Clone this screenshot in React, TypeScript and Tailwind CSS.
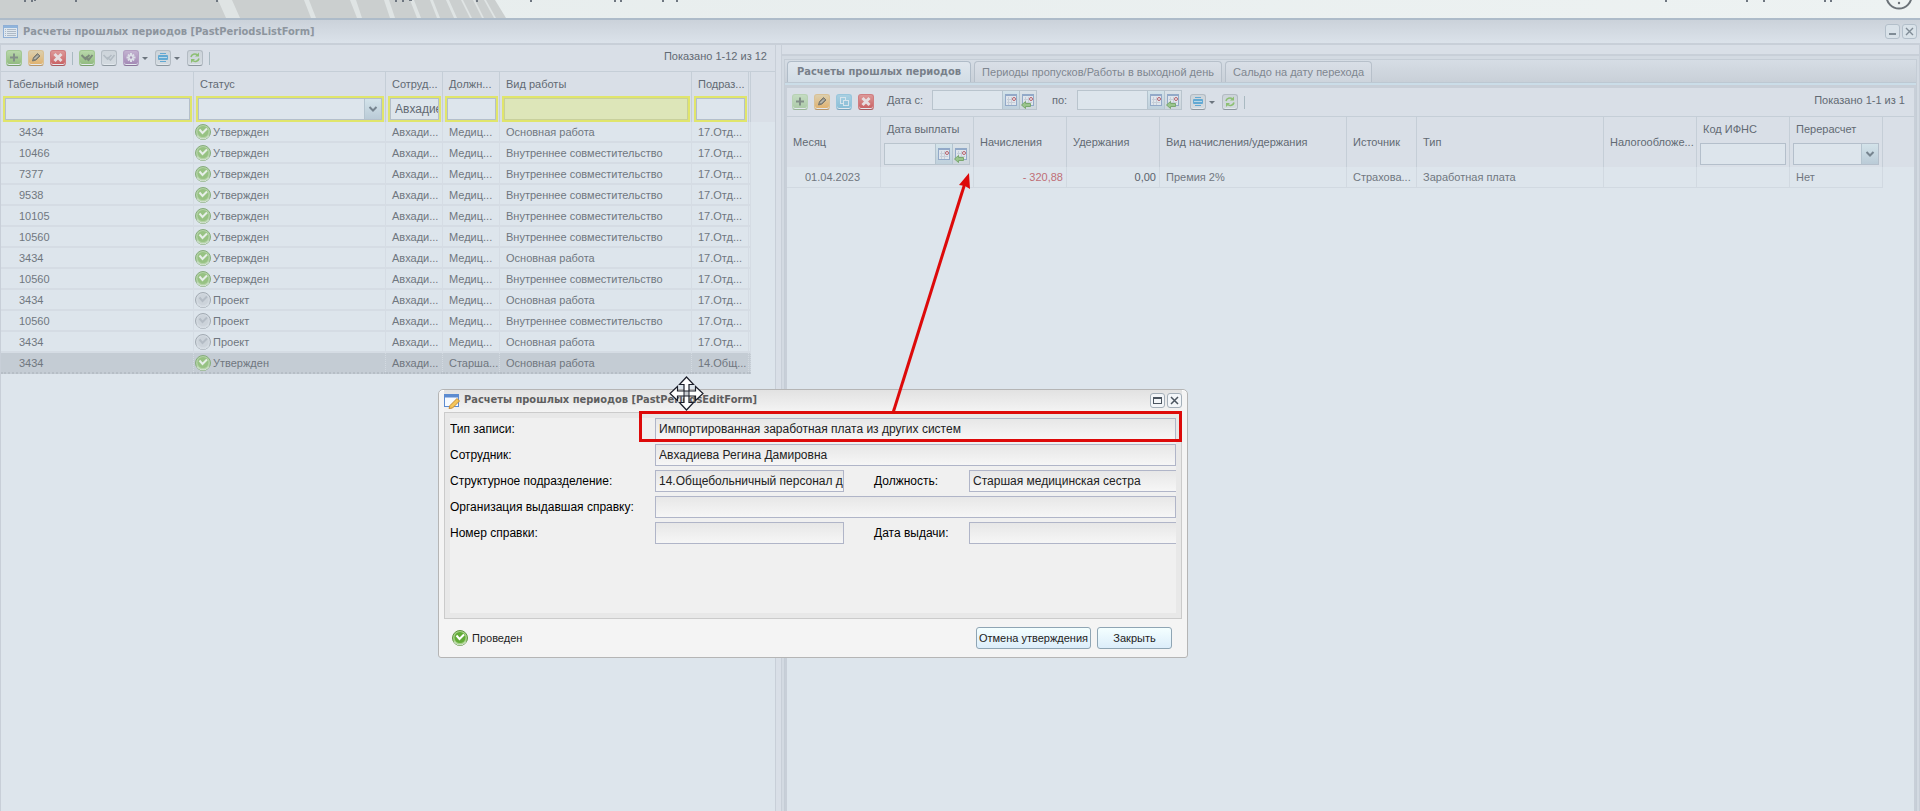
import { ReactNode } from 'react';

interface Row {
  num: string;
  approved: boolean;
  post: string;
  kind: string;
  dept: string;
  selected?: boolean;
}

const MAIN = 'Основная работа';
const INNER = 'Внутреннее совместительство';

const rows: Row[] = [
  { num: '3434', approved: true, post: 'Медиц...', kind: MAIN, dept: '17.Отд...' },
  { num: '10466', approved: true, post: 'Медиц...', kind: INNER, dept: '17.Отд...' },
  { num: '7377', approved: true, post: 'Медиц...', kind: INNER, dept: '17.Отд...' },
  { num: '9538', approved: true, post: 'Медиц...', kind: INNER, dept: '17.Отд...' },
  { num: '10105', approved: true, post: 'Медиц...', kind: INNER, dept: '17.Отд...' },
  { num: '10560', approved: true, post: 'Медиц...', kind: INNER, dept: '17.Отд...' },
  { num: '3434', approved: true, post: 'Медиц...', kind: MAIN, dept: '17.Отд...' },
  { num: '10560', approved: true, post: 'Медиц...', kind: INNER, dept: '17.Отд...' },
  { num: '3434', approved: false, post: 'Медиц...', kind: MAIN, dept: '17.Отд...' },
  { num: '10560', approved: false, post: 'Медиц...', kind: INNER, dept: '17.Отд...' },
  { num: '3434', approved: false, post: 'Медиц...', kind: MAIN, dept: '17.Отд...' },
  { num: '3434', approved: true, post: 'Старша...', kind: MAIN, dept: '14.Общ...', selected: true },
];

const tones = {
  green: 'from-[#b9d8ab] to-[#8fb97d] border-[#a3c893] border-b-[#7a9e6e]',
  greenDim: 'from-[#c4dcc2] to-[#abc9a6] border-[#b8d2b4] border-b-[#9ab598]',
  orange: 'from-[#dccfae] to-[#e0b06a] border-[#d9c196] border-b-[#b8966a]',
  red: 'from-[#dc9898] to-[#c85f62] border-[#d07d80] border-b-[#a85a5e]',
  blue: 'from-[#a9d0e2] to-[#86bdd6] border-[#98c6dc] border-b-[#7aa5bd]',
  violet: 'from-[#c3b2d0] to-[#a287b4] border-[#b39fc2] border-b-[#8a7599]',
  gray: 'from-[#cdd4da] to-[#d3dae0] border-[#b3bbc3] border-b-[#8d979f]',
};

const glyphs = {
  plus: <path d="M8 3.500v8M4 7.500h8" stroke="#828f88" strokeWidth="2" />,
  pencil: (
    <>
      <path d="M4.500 11l1-3.500 4-4 2.500 2.500-4 4z" fill="#8d8b80" stroke="#77776f" />
      <path d="M6.500 9l3.500-3.500" stroke="#d9dcd6" />
    </>
  ),
  cross: <path d="M4.500 4l7 7M11.500 4l-7 7" stroke="#e6dde0" strokeWidth="3" />,
  checks: <path d="M2.500 5l4 4 4-4M6.500 7l3 3L13.500 5" stroke="#7c8a7c" strokeWidth="2" />,
  checksDim: <path d="M2.500 5l4 4 4-4M6.500 7l3 3L13.500 5" stroke="#b2bbc3" strokeWidth="1.600" />,
  gear: (
    <>
      <path d="M8 3v9M3.500 7.500h9M5 4.500l6 6M11 4.500l-6 6" stroke="#dcdfe7" strokeWidth="2" />
      <circle cx="8" cy="7.500" r="1.200" fill="#a892b8" />
    </>
  ),
  copy: (
    <>
      <rect x="4.500" y="3.500" width="5" height="6" stroke="#d6e4ec" />
      <rect x="7.500" y="6.500" width="5" height="5" fill="#93c3da" stroke="#d6e4ec" />
    </>
  ),
  printer: (
    <>
      <path d="M5 3.500h6" stroke="#62a9d3" />
      <rect x="3" y="5" width="10" height="5" rx="1" fill="#62a9d3" />
      <path d="M4 7.500h8" stroke="#b9d8e8" />
      <path d="M5 11.500h6" stroke="#62a9d3" />
    </>
  ),
  refresh: (
    <>
      <path d="M4 7c.5-2.500 4-4 6.500-2M12 8.500c-.5 2.500-4 4-6.500 2" stroke="#8dbf73" strokeWidth="1.600" />
      <path d="M12 2.500v4H8zM4 13V9h4z" fill="#8dbf73" />
    </>
  ),
};

function ToolButton({ tone, glyph, title }: { tone: keyof typeof tones; glyph: keyof typeof glyphs; title: string }) {
  return (
    <button title={title} className={`w-4 h-4 shrink-0 rounded-[3px] border bg-linear-to-b shadow-[inset_0_-1px_0_#e3e9ee] ${tones[tone]}`}>
      <svg viewBox="1 1 14 14" fill="none" className="w-full h-full">
        {glyphs[glyph]}
      </svg>
    </button>
  );
}

function Caret() {
  return <span className="border-x-3 border-x-transparent border-t-3 border-t-[#6c757e] w-0 h-0 mx-px" />;
}

function Separator() {
  return <span className="w-px h-[13px] bg-[#a9b9c1]" />;
}

function StatusIcon({ approved, bright }: { approved: boolean; bright?: boolean }) {
  const rim = bright ? '#5f9440' : approved ? '#86ac7c' : '#a2aab2';
  const fill = bright ? '#62ab37' : approved ? '#97c283' : '#ccd3da';
  const top = bright ? '#a6d287' : approved ? '#b3d3a6' : '#d3dae1';
  const tick = bright ? '#ffffff' : approved ? '#e6eee8' : '#b4bcc5';
  return (
    <svg viewBox="0 0 16 16" className="w-4 h-4 shrink-0" fill="none">
      <circle cx="8" cy="8" r="7.500" fill={top} stroke={rim} />
      <circle cx="8" cy="7.500" r="5.500" fill={fill} />
      <path d="M2 11.500a7 7 0 0 0 12 0" stroke={approved ? '#dfe9e0' : '#dde4ea'} />
      <path d="M4.500 5.500L7.500 9 12 4.500" stroke={tick} strokeWidth="2" />
    </svg>
  );
}

function CalendarIcon({ arrow }: { arrow?: boolean }) {
  return (
    <svg viewBox="0 0 16 18" className="w-4 h-[18px]" fill="none">
      <rect x="2.500" y="3.500" width="11" height="11" fill="#dfe5ec" stroke="#92a9c8" />
      <path d="M2 4h12" stroke="#92a9c8" strokeWidth="2" />
      <path d="M4 8.500h8M4 11.500h8M5.500 6v8M8.500 6v8" stroke="#c6ced8" />
      <circle cx="11" cy="8" r="1.500" fill="#eceff3" stroke="#b5616c" />
      {arrow && <path d="M1.500 14l4-3.500v2h5v3h-5v2z" fill="#9ac58c" stroke="#7aa870" />}
    </svg>
  );
}

function DateField({ label, id, className }: { label: string; id: string; className: string }) {
  return (
    <div className={`flex border border-[#b9c4cd] bg-[#dde5ec] ${className}`}>
      <input id={id} aria-label={label} className="flex-1 min-w-0 h-full px-1 outline-none" />
      <button title="Календарь" className="w-[17px] border-l border-[#b4c4cf] bg-linear-to-b from-[#d3e3ea] to-[#bfd0dc]">
        <CalendarIcon />
      </button>
      <button title="Текущая дата" className="w-[17px] border-l border-[#b4c4cf] bg-linear-to-b from-[#dae2e8] to-[#cdd6dd]">
        <CalendarIcon arrow />
      </button>
    </div>
  );
}

function SelectField({ label, options }: { label: string; options: string[] }) {
  return (
    <div className="flex h-[22px] border border-[#b4bfcb] bg-[#dde5ec]">
      <select aria-label={label} className="flex-1 min-w-0 h-full appearance-none px-1 outline-none" defaultValue="">
        <option value=""></option>
        {options.map((o) => (
          <option key={o}>{o}</option>
        ))}
      </select>
      <span className="w-[17px] flex items-center justify-center border-l border-[#b4c4cf] bg-linear-to-b from-[#d3e3ea] to-[#bacbd7]">
        <svg viewBox="0 0 10 8" className="w-[10px] h-2" fill="none">
          <path d="M1.500 2l3.500 3.500L8.500 2" stroke="#76848f" strokeWidth="2" />
        </svg>
      </span>
    </div>
  );
}

function FilterHead({ title, children }: { title: string; children: ReactNode }) {
  return (
    <th className="p-0 pl-[2px] pr-px border-r border-[#c5ced7] font-normal text-left align-top">
      <div className="h-6 leading-6 pl-1 whitespace-nowrap">{title}</div>
      <div className="h-[26px] border-2 border-[#e0e56b]">{children}</div>
    </th>
  );
}

function PlainHead({ title, children }: { title: string; children?: ReactNode }) {
  return (
    <th className="h-[50px] p-0 px-[3px] border-r border-[#c5ced7] font-normal text-left align-middle">
      <div className={children ? 'h-[26px] leading-6 px-[3px] whitespace-nowrap' : 'px-[3px] whitespace-nowrap'}>{title}</div>
      {children && <div className="h-6">{children}</div>}
    </th>
  );
}

const filterInput = 'block w-full h-[22px] pl-1 border border-[#b4bfcb] bg-[#dde5ec] text-xs outline-none';

function EmployeesPanel() {
  return (
    <section className="w-[776px] shrink-0 flex flex-col border-x border-[#c8cfd8] bg-[#dde5ec]">
      <div className="h-[27px] flex items-center justify-between pl-[5px] pr-2 bg-[#d9dfe7] border-b border-[#c5ced7]">
        <div className="flex items-center gap-[6px]">
          <ToolButton tone="green" glyph="plus" title="Добавить" />
          <ToolButton tone="orange" glyph="pencil" title="Изменить" />
          <ToolButton tone="red" glyph="cross" title="Удалить" />
          <Separator />
          <ToolButton tone="green" glyph="checks" title="Утвердить" />
          <ToolButton tone="gray" glyph="checksDim" title="Снять утверждение" />
          <span className="flex items-center gap-[2px]">
            <ToolButton tone="violet" glyph="gear" title="Действия" />
            <Caret />
          </span>
          <span className="flex items-center gap-[2px]">
            <ToolButton tone="gray" glyph="printer" title="Печать" />
            <Caret />
          </span>
          <ToolButton tone="gray" glyph="refresh" title="Обновить" />
          <Separator />
        </div>
        <span className="pb-1">Показано 1-12 из 12</span>
      </div>

      <table className="w-full table-fixed border-separate border-spacing-0">
        <colgroup>
          <col className="w-[193px]" />
          <col className="w-[192px]" />
          <col className="w-[57px]" />
          <col className="w-[57px]" />
          <col className="w-[192px]" />
          <col className="w-[57px]" />
          <col className="w-[2px]" />
          <col />
        </colgroup>
        <thead className="bg-[#d9dfe7]">
          <tr>
            <FilterHead title="Табельный номер">
              <input aria-label="Табельный номер" className={filterInput} />
            </FilterHead>
            <FilterHead title="Статус">
              <SelectField label="Статус" options={['Утвержден', 'Проект']} />
            </FilterHead>
            <FilterHead title="Сотруд...">
              <input aria-label="Сотрудник" defaultValue="Авхадие" className={filterInput} />
            </FilterHead>
            <FilterHead title="Должн...">
              <input aria-label="Должность" className={filterInput} />
            </FilterHead>
            <FilterHead title="Вид работы">
              <input aria-label="Вид работы" className="block w-full h-[22px] px-1 border border-[#c8d09c] bg-[#dde6b9] text-xs outline-none" />
            </FilterHead>
            <FilterHead title="Подраз...">
              <input aria-label="Подразделение" className={filterInput} />
            </FilterHead>
            <th className="p-0 border-r border-[#c5ced7]"></th>
            <th className="p-0"></th>
          </tr>
        </thead>
        <tbody className="text-[#70777f]">
          {rows.map((row, i) => {
            const cell = row.selected
              ? 'h-[21px] p-0 leading-4 whitespace-nowrap border-r border-r-[#d3dae1] border-b-2 border-b-[#b6bec6] border-dotted bg-[#c4ccd4]'
              : 'h-[21px] p-0 leading-4 whitespace-nowrap border-r border-b-2 border-[#d5dce4]';
            return (
              <tr key={i}>
                <td className={`${cell} pl-[18px]`}>{row.num}</td>
                <td className={`${cell} pl-px`}>
                  <span className="flex items-center gap-[2px]">
                    <StatusIcon approved={row.approved} />
                    {row.approved ? 'Утвержден' : 'Проект'}
                  </span>
                </td>
                <td className={`${cell} pl-[6px]`}>Авхади...</td>
                <td className={`${cell} pl-[6px]`}>{row.post}</td>
                <td className={`${cell} pl-[6px]`}>{row.kind}</td>
                <td className={`${cell} pl-[6px]`}>{row.dept}</td>
                <td className={cell}></td>
                <td className="p-0"></td>
              </tr>
            );
          })}
        </tbody>
      </table>
    </section>
  );
}

function PeriodsPanel() {
  const cell = 'h-[21px] p-0 px-[6px] leading-4 whitespace-nowrap border-r border-b border-[#d1d9e1]';
  return (
    <section className="flex-1 min-w-0 ml-[5px] flex flex-col border-x border-[#c8cfd8] bg-[#d3dae2]">
      <div className="h-[11px] shrink-0 bg-[#d9dfe7] border-b-2 border-[#c8cfd8]" />
      <div className="flex-1 flex flex-col mx-[2px] mt-[3px] border border-b-0 border-[#c5cdd6]">
        <div role="tablist" className="h-[23px] shrink-0 flex items-stretch gap-[3px] pl-[2px] pt-px bg-linear-to-b from-[#d6dde5] to-[#c9d0d8] border-b border-[#bdc8d2] text-[#7f8790]">
          <button role="tab" aria-selected="true" className="px-[9px] border border-b-0 border-[#b0bcc8] rounded-t-[4px] bg-linear-to-b from-[#dfe6ed] to-[#d2dde6] font-['DejaVu_Sans_Condensed'] font-bold text-[#78808a]">
            Расчеты прошлых периодов
          </button>
          <button role="tab" aria-selected="false" className="px-[7px] border border-b-0 border-[#b7c0ca] rounded-t-[4px] bg-linear-to-b from-[#d9dfe7] to-[#ced5dd]">
            Периоды пропусков/Работы в выходной день
          </button>
          <button role="tab" aria-selected="false" className="px-[7px] border border-b-0 border-[#b7c0ca] rounded-t-[4px] bg-linear-to-b from-[#d9dfe7] to-[#ced5dd]">
            Сальдо на дату перехода
          </button>
        </div>
        <div className="h-[2px] bg-[#cbdde8]" />

        <div className="flex-1 border-t-[3px] border-x-2 border-[#c8cfd8] bg-[#dde5ec]">
          <div className="h-[29px] flex items-start justify-between pl-[5px] pr-[9px] bg-[#d9dfe7] border-b border-[#c5ced7]">
            <div className="flex items-start">
              <div className="flex items-center gap-[6px] pt-[6px]">
                <ToolButton tone="greenDim" glyph="plus" title="Добавить" />
                <ToolButton tone="orange" glyph="pencil" title="Изменить" />
                <ToolButton tone="blue" glyph="copy" title="Копировать" />
                <ToolButton tone="red" glyph="cross" title="Удалить" />
              </div>
              <label htmlFor="date-from" className="w-[58px] pl-[13px] leading-6">Дата с:</label>
              <DateField id="date-from" label="Дата с" className="w-[105px] h-5 mt-[2px]" />
              <label htmlFor="date-to" className="w-10 pl-[15px] leading-6">по:</label>
              <DateField id="date-to" label="Дата по" className="w-[105px] h-5 mt-[2px]" />
              <div className="flex items-center gap-[6px] pl-2 pt-[6px]">
                <span className="flex items-center gap-[2px]">
                  <ToolButton tone="gray" glyph="printer" title="Печать" />
                  <Caret />
                </span>
                <ToolButton tone="gray" glyph="refresh" title="Обновить" />
                <Separator />
              </div>
            </div>
            <span className="leading-6">Показано 1-1 из 1</span>
          </div>

          <table className="w-full table-fixed border-separate border-spacing-0">
            <colgroup>
              <col className="w-[94px]" />
              <col className="w-[93px]" />
              <col className="w-[93px]" />
              <col className="w-[93px]" />
              <col className="w-[187px]" />
              <col className="w-[70px]" />
              <col className="w-[187px]" />
              <col className="w-[93px]" />
              <col className="w-[93px]" />
              <col className="w-[93px]" />
              <col />
            </colgroup>
            <thead className="bg-[#d9dfe7]">
              <tr>
                <PlainHead title="Месяц" />
                <PlainHead title="Дата выплаты">
                  <DateField id="pay-date" label="Дата выплаты" className="h-[22px]" />
                </PlainHead>
                <PlainHead title="Начисления" />
                <PlainHead title="Удержания" />
                <PlainHead title="Вид начисления/удержания" />
                <PlainHead title="Источник" />
                <PlainHead title="Тип" />
                <PlainHead title="Налогообложе..." />
                <PlainHead title="Код ИФНС">
                  <input aria-label="Код ИФНС" className={filterInput} />
                </PlainHead>
                <PlainHead title="Перерасчет">
                  <SelectField label="Перерасчет" options={['Да', 'Нет']} />
                </PlainHead>
                <th className="p-0"></th>
              </tr>
            </thead>
            <tbody className="text-[#70777f]">
              <tr>
                <td className={`${cell} pl-[18px]`}>01.04.2023</td>
                <td className={cell}></td>
                <td className={`${cell} pr-[3px] text-right text-[#bf6f77]`}>- 320,88</td>
                <td className={`${cell} pr-[3px] text-right text-[#5a626b]`}>0,00</td>
                <td className={cell}>Премия 2%</td>
                <td className={cell}>Страхова...</td>
                <td className={cell}>Заработная плата</td>
                <td className={cell}></td>
                <td className={cell}></td>
                <td className={cell}>Нет</td>
                <td className="p-0"></td>
              </tr>
            </tbody>
          </table>
        </div>
      </div>
    </section>
  );
}

const fieldInput = 'h-[22px] min-w-0 pl-[3px] border border-[#b0b5c8] bg-linear-to-b from-[#e7e7e7] to-[#f6f6f6] text-[#222222] outline-none';

function EditDialog() {
  return (
    <div role="dialog" aria-label="Расчеты прошлых периодов" className="absolute left-[438px] top-[389px] w-[750px] rounded-t-[5px] rounded-b-[3px] border border-[#b5b5b5] bg-[#f4f4f4] px-[5px] text-xs text-black shadow-[inset_0_1px_0_#ffffff]">
      <header className="h-[22px] flex items-center gap-1 pb-px bg-linear-to-b from-[#e2e2e2] to-[#f4f4f4]">
        <svg viewBox="0 0 16 16" className="w-4 h-4" fill="none">
          <rect x=".5" y="1.500" width="14" height="12" fill="#f6faff" stroke="#5c8bd0" />
          <path d="M1 3h13" stroke="#5c8bd0" strokeWidth="3" />
          <path d="M6 12.500L13 5.500l2.500 2.500L8.500 15l-3.500.5z" fill="#f5c65a" stroke="#c58a34" />
        </svg>
        <h2 className="flex-1 font-['DejaVu_Sans_Condensed'] font-bold text-[11px] text-[#5e5e5e]">Расчеты прошлых периодов [PastPeriodsEditForm]</h2>
        <div className="flex gap-[2px]">
          <button title="Развернуть" className="w-[15px] h-[15px] rounded-[3px] border border-[#a4afb9] bg-[#f3f6f9] flex items-center justify-center">
            <span className="w-[9px] h-[7px] border border-t-2 border-[#4b5560]" />
          </button>
          <button title="Закрыть" className="w-[15px] h-[15px] rounded-[3px] border border-[#a4afb9] bg-[#f3f6f9] flex items-center justify-center">
            <svg viewBox="0 0 9 9" className="w-[9px] h-[9px]">
              <path d="M1 1l7 7M8 1l-7 7" stroke="#4b5560" strokeWidth="1.500" />
            </svg>
          </button>
        </div>
      </header>

      <div className="h-[207px] border border-[#cbcbcb] bg-[#e8e8e8] p-[5px]">
        <div className="h-full overflow-hidden bg-[#f0f0f0] flex flex-col gap-1">
          <div className="flex items-center">
            <label htmlFor="type" className="w-[205px]">Тип записи:</label>
            <input id="type" readOnly defaultValue="Импортированная заработная плата из других систем" className={`${fieldInput} flex-1`} />
          </div>
          <div className="flex items-center">
            <label htmlFor="person" className="w-[205px]">Сотрудник:</label>
            <input id="person" readOnly defaultValue="Авхадиева Регина Дамировна" className={`${fieldInput} flex-1`} />
          </div>
          <div className="flex items-center">
            <label htmlFor="dept" className="w-[205px]">Структурное подразделение:</label>
            <input id="dept" readOnly defaultValue="14.Общебольничный персонал д" className={`${fieldInput} w-[189px]`} />
            <label htmlFor="post" className="w-[125px] pl-[30px]">Должность:</label>
            <input id="post" readOnly defaultValue="Старшая медицинская сестра" className={`${fieldInput} flex-1 border-r-0`} />
          </div>
          <div className="flex items-center">
            <label htmlFor="org" className="w-[205px]">Организация выдавшая справку:</label>
            <input id="org" readOnly className={`${fieldInput} flex-1`} />
          </div>
          <div className="flex items-center">
            <label htmlFor="doc" className="w-[205px]">Номер справки:</label>
            <input id="doc" readOnly className={`${fieldInput} w-[189px]`} />
            <label htmlFor="issued" className="w-[125px] pl-[30px]">Дата выдачи:</label>
            <input id="issued" readOnly className={`${fieldInput} flex-1 border-r-0`} />
          </div>
        </div>
      </div>

      <footer className="h-[38px] flex items-center pl-2 pr-[10px] text-[11px] text-[#222222]">
        <StatusIcon approved bright />
        <span className="flex-1 pl-1">Проведен</span>
        <button className="h-[22px] w-[115px] mr-[6px] rounded-[3px] border border-[#8fa5b4] bg-linear-to-b from-[#f4ffff] to-[#dcedfa] whitespace-nowrap">
          Отмена утверждения
        </button>
        <button className="h-[22px] w-[75px] rounded-[3px] border border-[#8fa5b4] bg-linear-to-b from-[#f4ffff] to-[#dcedfa]">Закрыть</button>
      </footer>
    </div>
  );
}

function Banner() {
  return (
    <div className="h-[18px] shrink-0 flex justify-between overflow-hidden bg-linear-to-r from-[#e6ecec] to-[#edf2f2]">
      <svg viewBox="0 0 700 18" className="w-[700px] h-[18px]">
        <path d="M0 0h495l11 18H0z" fill="#cbcfcf" />
        <path d="M218 0h14l8 18h-14zM304 0h5l7 18h-5zM350 0h6l6 18h-5zM384 0h5l6 18h-5zM410 0h4l7 18h-4zM430 0h3l7 18h-3zM446 0h3l8 18h-3zM461 0h2l9 18h-2zM473 0h2l9 18h-2zM484 0h2l10 18h-2z" fill="#dfe4e4" />
        <path d="M24 0h2v2h-2zM31 0h2v2h-2zM34 0h2v1h-2zM75 0h2v2h-2zM216 0h2v2h-2zM395 0h2v2h-2zM402 0h2v2h-2zM409 0h3v1h-3zM476 0h2v2h-2zM530 0h2v2h-2zM614 0h2v2h-2zM620 0h2v2h-2zM662 0h2v2h-2zM676 0h2v2h-2z" fill="#6e7680" />
      </svg>
      <svg viewBox="0 0 260 18" className="w-[260px] h-[18px]" fill="none">
        <path d="M5 0h2v2h-2zM86 0h2v2h-2zM103 0h2v2h-2zM164 0h2v2h-2zM170 0h2v2h-2z" fill="#6e7680" />
        <circle cx="239" cy="-4" r="12.500" stroke="#6b7278" strokeWidth="2" />
        <circle cx="239" cy="3" r="1.200" fill="#6b7278" />
      </svg>
    </div>
  );
}

export default function App() {
  return (
    <div className="relative h-screen overflow-hidden flex flex-col bg-[#d9dfe7] font-['Liberation_Sans',sans-serif] text-[11px] leading-4 text-[#626a73]">
      <Banner />
      <header className="h-[27px] shrink-0 flex items-center gap-[5px] px-[3px] border-t-2 border-t-[#adbbc9] border-b-2 border-b-[#c8cfd8] bg-linear-to-b from-[#cbd2da] to-[#dbe2ea]">
        <svg viewBox="0 0 15 13" className="w-[15px] h-[13px]" fill="none">
          <rect x=".5" y=".5" width="14" height="12" fill="#dfe7ef" stroke="#8fafd6" />
          <path d="M1 2h13" stroke="#8fb4dc" strokeWidth="2" />
          <path d="M2 4.500h1M4 4.500h9M2 6.500h1M4 6.500h9M2 8.500h1M4 8.500h9M2 10.500h1M4 10.500h9" stroke="#adb9c6" />
        </svg>
        <h1 className="flex-1 font-['DejaVu_Sans_Condensed'] font-bold text-[#8d959e]">Расчеты прошлых периодов [PastPeriodsListForm]</h1>
        <div className="flex gap-[2px]">
          <button title="Свернуть" className="w-[15px] h-[15px] rounded-[3px] border border-[#b3bfca] bg-[#d9e2e9] flex items-end justify-center pb-[3px]">
            <span className="w-[7px] h-[2px] bg-[#808c96]" />
          </button>
          <button title="Закрыть" className="w-[15px] h-[15px] rounded-[3px] border border-[#b3bfca] bg-[#d9e2e9] flex items-center justify-center">
            <svg viewBox="0 0 9 9" className="w-[9px] h-[9px]">
              <path d="M1 1l7 7M8 1l-7 7" stroke="#808c96" strokeWidth="1.400" />
            </svg>
          </button>
        </div>
      </header>

      <main className="flex-1 min-h-0 flex">
        <EmployeesPanel />
        <PeriodsPanel />
      </main>

      <EditDialog />

      {/* Red callout: frame around the record type and the arrow to the column */}
      <div className="absolute left-[639px] top-[411px] w-[543px] h-[31px] border-3 border-[#dd0a0a] pointer-events-none" />
      <svg viewBox="0 0 90 244" className="absolute left-[886px] top-[170px] w-[90px] h-[244px] pointer-events-none">
        <path d="M7 243L79 13" stroke="#dd0a0a" strokeWidth="3" />
        <path d="M83 3l1 16-5-3-6-1z" fill="#dd0a0a" />
      </svg>

      {/* Move cursor */}
      <svg viewBox="0 0 36 36" className="absolute left-[669px] top-[376px] w-9 h-9 pointer-events-none">
        <path
          d="M17.500 1L24.500 8.500H20V15H26.500V10.500L34 17.500L26.500 24.500V20H20V26.500H24.500L17.500 34L10.500 26.500H15V20H8.500V24.500L1 17.500L8.500 10.500V15H15V8.500H10.500Z"
          fill="#ffffff"
          stroke="#1c1f2b"
          strokeWidth="1.200"
        />
        <path d="M15 15h5v5h-5z" fill="#c8ccd2" stroke="#1c1f2b" />
      </svg>
    </div>
  );
}
